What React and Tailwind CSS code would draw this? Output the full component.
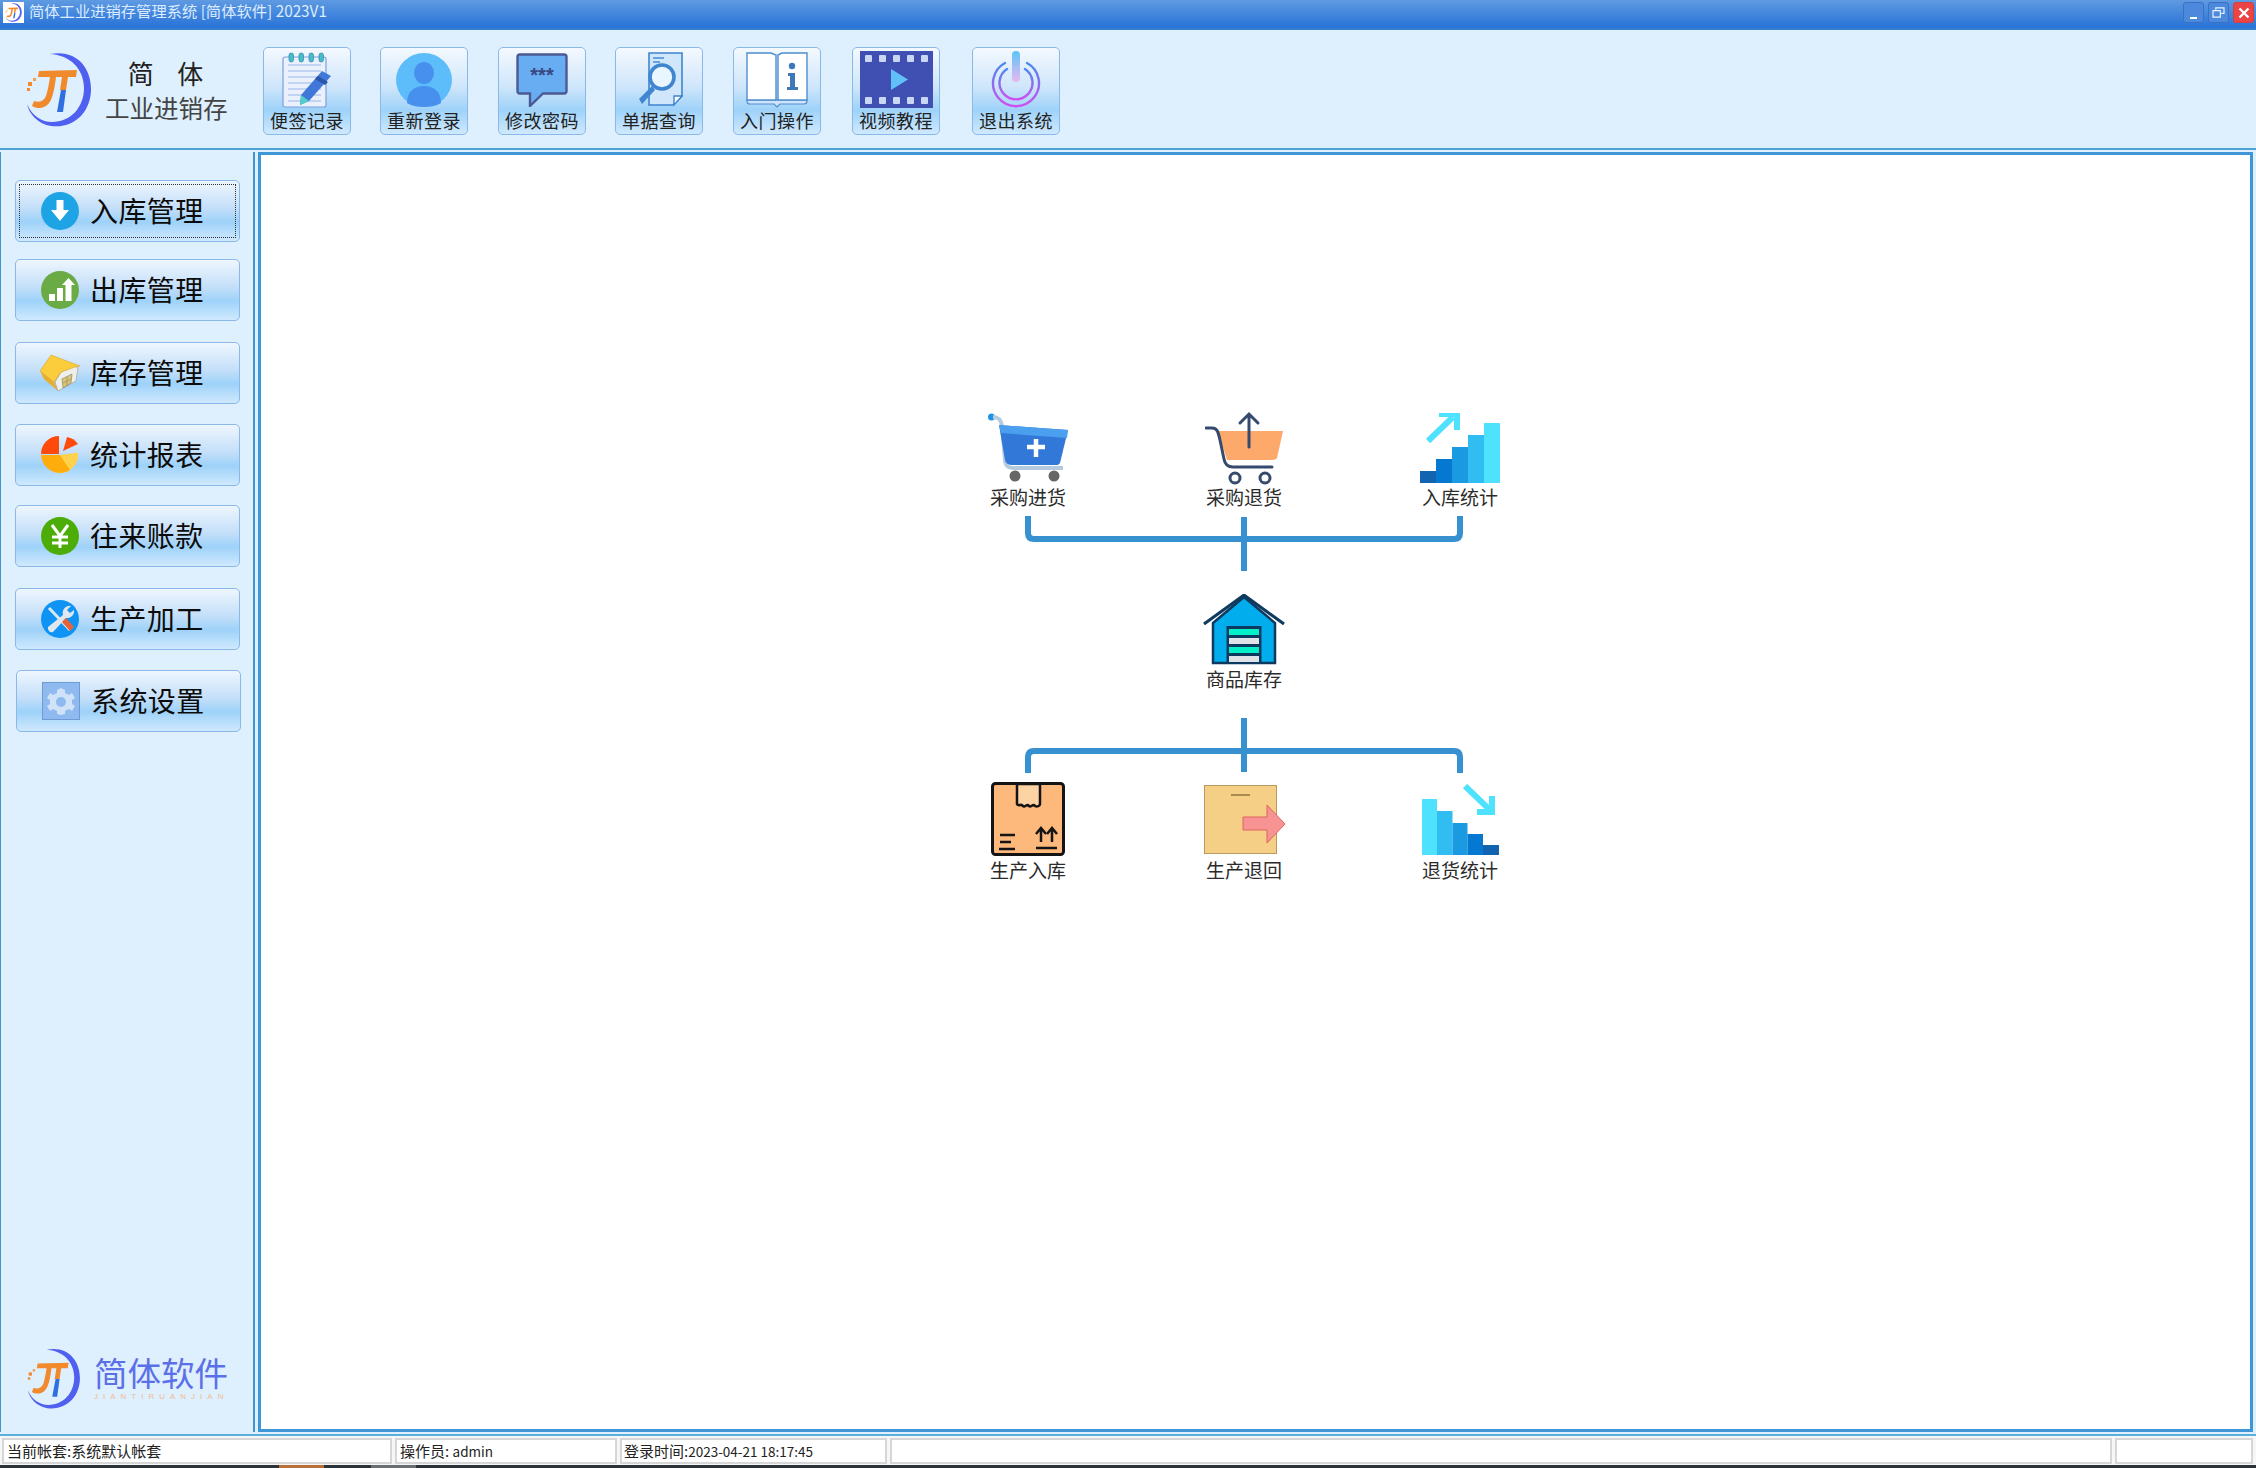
import React from "react";

const F = "font-['Noto_Sans_CJK_SC','Liberation_Sans',sans-serif]";

function Logo({ className }) {
  return (
    <svg viewBox="0 0 65 75" className={className}>
      <path d="M24 2C50-3 65 15 65 37C65 60 48 77 25 74C12 72 3 62 1 52C6 64 16 70 26 70C45 70 58 55 58 36C58 17 44 3 24 2Z" fill="#4f5ff0" />
      <path d="M13 19L51 18L50 25L42 25L40 38L34 38L36 25L30 25C28 40 26 52 18 55C14 57 9 56 6 54L8 49C13 51 18 49 20 44C22 38 23 31 24 25L12 25Z" fill="#f08a2c" />
      <path d="M35 38L40 38L37 60L31 60Z" fill="#2f6fe0" />
      <rect x="2" y="30" width="4" height="4" fill="#f08a2c" />
      <rect x="7" y="26" width="3" height="3" fill="#f5a050" />
      <rect x="1" y="36" width="3" height="3" fill="#f08a2c" />
    </svg>
  );
}

function NoteIcon() {
  return (
    <svg viewBox="0 0 51 56" className="w-[51px] h-[56px]">
      <rect x="1" y="5" width="43" height="50" rx="2" fill="#eaf1fd" stroke="#7d9fe0" strokeWidth="1.2" />
      {[13, 19, 25, 31, 37, 43, 49].map((y) => (
        <line key={y} x1="6" x2="39" y1={y} y2={y} stroke="#b4c8ef" strokeWidth="1.6" />
      ))}
      {[7, 17, 27, 37].map((x) => (
        <rect key={x} x={x} y="1" width="4.5" height="9" rx="2.2" fill="#43bfc6" stroke="#3b7fb4" strokeWidth="0.7" />
      ))}
      <path d="M40 19L49 24L27 49L18 53L19 43Z" fill="#3f78d8" />
      <path d="M19 43L27 49L18 53Z" fill="#50d0c8" />
      <path d="M36 24L46 30L43 33L33 27Z" fill="#2b55a8" />
    </svg>
  );
}
function AvatarIcon() {
  return (
    <svg viewBox="0 0 56 54" className="w-[56px] h-[54px]">
      <ellipse cx="28" cy="27" rx="28" ry="27" fill="#5cbdfa" />
      <ellipse cx="28" cy="20" rx="10" ry="11" fill="#4790ee" />
      <path d="M11 50C11 38 19 33 28 33C37 33 45 38 45 50C40 53 34 54 28 54C22 54 16 53 11 50Z" fill="#4790ee" />
    </svg>
  );
}
function ChatIcon() {
  return (
    <svg viewBox="0 0 52 54" className="w-[52px] h-[54px]">
      <path d="M4 1.5H48Q50.500 1.500 50.500 4V38Q50.500 40.500 48 40.500H27L14 53V40.500H4Q1.500 40.500 1.500 38V4Q1.500 1.500 4 1.500Z" fill="#68acf2" stroke="#4c5a94" strokeWidth="2.4" />
      <text x="26" y="29" textAnchor="middle" fontSize="20" fontWeight="700" fill="#38477e" fontFamily="Liberation Sans">***</text>
    </svg>
  );
}
function DocSearchIcon() {
  return (
    <svg viewBox="0 0 48 56" className="w-[48px] h-[56px]">
      <path d="M14 1H47V44L38 53H14Z" fill="#cfe6fb" stroke="#3f85d0" strokeWidth="1.6" />
      <path d="M47 44H39V53Z" fill="#fff" stroke="#3f85d0" strokeWidth="1.4" />
      <line x1="18" y1="6" x2="29" y2="6" stroke="#3f85d0" strokeWidth="1.4" />
      <line x1="18" y1="10" x2="25" y2="10" stroke="#3f85d0" strokeWidth="1.4" />
      <circle cx="27" cy="25" r="12" fill="#e9f6ff" stroke="#3f85d0" strokeWidth="3.6" />
      <path d="M17 34L4 47L7 52L20 38Z" fill="#3f85d0" />
    </svg>
  );
}
function BookIcon() {
  return (
    <svg viewBox="0 0 62 56" className="w-[62px] h-[56px]">
      <path d="M1 49V48H61V49Q61 52 58 52H34L31 55L28 52H4Q1 52 1 49Z" fill="#cfe4fa" stroke="#4f8fd0" strokeWidth="1.2" />
      <path d="M1 1H25L30 3V48H1Z" fill="#fff" stroke="#4f8fd0" strokeWidth="1.4" />
      <path d="M61 1H36L32 3V48H61Z" fill="#fff" stroke="#4f8fd0" strokeWidth="1.4" />
      <circle cx="46" cy="14" r="3.200" fill="#3f78b8" />
      <path d="M42 21H49V35H52V38H41V35H44V24H42Z" fill="#3f78b8" />
    </svg>
  );
}
function FilmIcon() {
  return (
    <svg viewBox="0 0 73 57" className="w-[73px] h-[57px]">
      <rect width="73" height="57" fill="#3f4fb2" />
      {[5, 19, 33, 47, 61].map((x) => (
        <g key={x}>
          <rect x={x} y="4" width="7" height="7" rx="1" fill="#c9d6f4" />
          <rect x={x} y="46" width="7" height="7" rx="1" fill="#c9d6f4" />
        </g>
      ))}
      <path d="M31 18L48 28.500L31 39Z" fill="#62c0f8" />
    </svg>
  );
}
function PowerIcon() {
  return (
    <svg viewBox="0 0 50 58" className="w-[50px] h-[58px]">
      <defs>
        <linearGradient id="pw" x1="0" y1="0" x2="0" y2="1">
          <stop offset="0" stopColor="#4a8af0" />
          <stop offset="1" stopColor="#d04ff0" />
        </linearGradient>
        <linearGradient id="pb" x1="0" y1="0" x2="0" y2="1">
          <stop offset="0" stopColor="#5cc4f8" />
          <stop offset="1" stopColor="#e8b8f0" />
        </linearGradient>
      </defs>
      <path d="M14 12A23 23 0 1 0 36 12" fill="none" stroke="url(#pw)" strokeWidth="2.400" strokeLinecap="round" />
      <path d="M16 18A16.500 16.500 0 1 0 34 18" fill="none" stroke="url(#pw)" strokeWidth="2.400" strokeLinecap="round" />
      <rect x="21" y="0" width="8" height="31" rx="4" fill="url(#pb)" />
    </svg>
  );
}

const tools = [
  ["便签记录", NoteIcon, "ml-[263px]"],
  ["重新登录", AvatarIcon, "ml-[29px]"],
  ["修改密码", ChatIcon, "ml-[30px]"],
  ["单据查询", DocSearchIcon, "ml-[29px]"],
  ["入门操作", BookIcon, "ml-[30px]"],
  ["视频教程", FilmIcon, "ml-[31px]"],
  ["退出系统", PowerIcon, "ml-[32px]"],
];

function DownIcon() {
  return (
    <svg viewBox="0 0 38 38" className="w-[38px] h-[38px]">
      <circle cx="19" cy="19" r="19" fill="#1ea3e4" />
      <path d="M15.500 8H22.500V18H28L19 29L10 18H15.500Z" fill="#fff" />
    </svg>
  );
}
function BarsIcon() {
  return (
    <svg viewBox="0 0 38 38" className="w-[38px] h-[38px]">
      <circle cx="19" cy="19" r="19" fill="#6aab46" />
      <rect x="8" y="23" width="6" height="7" fill="#fff" />
      <rect x="16" y="17" width="6" height="13" fill="#fff" />
      <path d="M24.500 30V14H21L27.500 7L34 14H30.500V30Z" fill="#fff" />
    </svg>
  );
}
function HouseIcon() {
  return (
    <svg viewBox="0 0 42 38" className="w-[42px] h-[38px]">
      <path d="M1 17L15 28L19 37L5 25Z" fill="#e8ae2c" />
      <path d="M16 28L22 18L36 12L39 14L37 27L19 37Z" fill="#eeeeea" stroke="#a8a8a0" strokeWidth="0.8" />
      <path d="M12 1L41 12L36 13L22 18L15 28L1 17Z" fill="#fbcd3c" stroke="#d8a428" strokeWidth="0.6" />
      <path d="M23 25L33 20L32 29L24 34Z" fill="#dcc470" stroke="#8a8a70" strokeWidth="0.7" />
      <path d="M24 29L32 25M28 23L28 32" stroke="#8a8a70" strokeWidth="0.6" />
    </svg>
  );
}
function PieIcon() {
  return (
    <svg viewBox="0 0 38 38" className="w-[38px] h-[38px]">
      <path d="M19 19L37 19A18 18 0 0 1 9 34Z" fill="#ffd24e" transform="rotate(-8 19 19)" />
      <path d="M19 19L29 34A19 19 0 0 1 0 19Z" fill="#ffad0c" />
      <path d="M18 18H0A18 18 0 0 1 18 0Z" fill="#ff4a0c" />
      <path d="M22 15L26 1A17 17 0 0 1 37 8Z" fill="#ff4a0c" />
    </svg>
  );
}
function YenIcon() {
  return (
    <svg viewBox="0 0 38 38" className="w-[38px] h-[38px]">
      <circle cx="19" cy="19" r="19" fill="#4cac08" />
      <path d="M11 8L19 19L27 8M11 20H27M11 26H27M19 19V31" fill="none" stroke="#fff" strokeWidth="3" />
    </svg>
  );
}
function ToolsIcon() {
  return (
    <svg viewBox="0 0 38 38" className="w-[38px] h-[38px]">
      <circle cx="19" cy="19" r="19" fill="#0f93f4" />
      <path d="M8 8L29 30" stroke="#dbe9f2" strokeWidth="3" />
      <path d="M30 6A7 7 0 0 0 22 15L7 27A4 4 0 0 0 12 32L25 18A7 7 0 0 0 33 10L29 13L26 10Z" fill="#dfe8ee" />
      <path d="M21 22L25 18L33 27L29 31Z" fill="#e8623a" />
    </svg>
  );
}
function GearIcon() {
  return (
    <svg viewBox="0 0 38 38" className="w-[38px] h-[38px]">
      <rect x="0.500" y="0.500" width="37" height="37" fill="#8fbaf0" stroke="#6f9ad6" />
      <path d="M19 6L23 8V11L27 13L30 11L33 16L30 18V22L33 24L30 29L27 27L23 29V32L19 33L15 32V29L11 27L8 29L5 24L8 22V18L5 16L8 11L11 13L15 11V8Z" fill="#cfe2f8" />
      <circle cx="19" cy="20" r="5" fill="#8fbaf0" />
    </svg>
  );
}

const navs = [
  ["入库管理", DownIcon, "mt-[28px]", "ml-[14px]", true],
  ["出库管理", BarsIcon, "mt-[17px]", "ml-[14px]", false],
  ["库存管理", HouseIcon, "mt-[21px]", "ml-[14px]", false],
  ["统计报表", PieIcon, "mt-[20px]", "ml-[14px]", false],
  ["往来账款", YenIcon, "mt-[19px]", "ml-[14px]", false],
  ["生产加工", ToolsIcon, "mt-[21px]", "ml-[14px]", false],
  ["系统设置", GearIcon, "mt-[20px]", "ml-[15px]", false],
];

function CartPlus() {
  return (
    <svg viewBox="0 0 80 70" className="w-[80px] h-[70px]">
      <circle cx="3.500" cy="4" r="3.500" fill="#1f94e4" />
      <path d="M5 4C11 4 13 7 14 13L17 46C17 53 20 55 26 55H75" fill="none" stroke="#b4cade" strokeWidth="4" />
      <path d="M11 12L80 17L72 50Q71 52 69 52H24Q18 52 17 47Z" fill="#3278d8" />
      <path d="M11 12L80 17L79 25L13 20Z" fill="#4aa0ee" />
      <path d="M39 34H57M48 26V44" stroke="#fff" strokeWidth="4.500" />
      <circle cx="27" cy="63" r="5.500" fill="#666" />
      <circle cx="66" cy="63" r="5.500" fill="#666" />
    </svg>
  );
}
function CartUp() {
  return (
    <svg viewBox="0 0 78 74" className="w-[78px] h-[74px]">
      <path d="M13 20H78L72 47Q71 49 65 49H22Z" fill="#fda96c" />
      <path d="M1 17H7C12 17 13 20 15 29L19 48C20 54 23 56 28 56H67" fill="none" stroke="#344a6e" strokeWidth="3" strokeLinecap="round" />
      <path d="M44 36V4M35 12L44 3L53 12" fill="none" stroke="#344a6e" strokeWidth="3" strokeLinecap="round" />
      <circle cx="30" cy="67" r="5" fill="none" stroke="#344a6e" strokeWidth="3" />
      <circle cx="60" cy="67" r="5" fill="none" stroke="#344a6e" strokeWidth="3" />
    </svg>
  );
}
function ChartUp() {
  return (
    <svg viewBox="0 0 80 70" className="w-[80px] h-[70px]">
      <rect x="0" y="58" width="16" height="12" fill="#1364b0" />
      <rect x="16" y="46" width="16" height="24" fill="#0578d2" />
      <rect x="32" y="34" width="16" height="36" fill="#1a9ae0" />
      <rect x="48" y="22" width="16" height="48" fill="#32bdf2" />
      <rect x="64" y="10" width="16" height="60" fill="#4fe2ff" />
      <path d="M8 28L33 4M19 1H37V17" fill="none" stroke="#4fe2ff" strokeWidth="6" />
    </svg>
  );
}
function Warehouse() {
  return (
    <svg viewBox="0 0 82 71" className="w-[82px] h-[71px]">
      <path d="M10 29L41 3L72 29V69H10Z" fill="#02aded" stroke="#0f3a60" strokeWidth="2.500" />
      <path d="M1 30L41 1L81 30" fill="none" stroke="#0f3a60" strokeWidth="3" />
      <rect x="23.500" y="32" width="35" height="37" fill="#0f3a60" />
      <rect x="26" y="35" width="30" height="6" fill="#04f0c8" />
      <rect x="26" y="44" width="30" height="6" fill="#dfe3e8" />
      <rect x="26" y="53" width="30" height="6" fill="#04f0c8" />
      <rect x="26" y="62" width="30" height="6" fill="#dfe3e8" />
    </svg>
  );
}
function BoxIcon() {
  return (
    <svg viewBox="0 0 74 74" className="w-[74px] h-[74px]">
      <rect x="1.500" y="1.500" width="71" height="71" rx="3" fill="#fdb87c" stroke="#141414" strokeWidth="3" />
      <path d="M26 2V22C28 25 30 21 32 24C34 26 36 21 38 24C40 26 42 21 44 24C46 25 49 24 49 22V2Z" fill="#fdd3a4" stroke="#141414" strokeWidth="2.500" />
      <path d="M9 53H24M9 60H20M8 67H24M45 66H66" stroke="#141414" strokeWidth="2.500" />
      <path d="M50 60V47M45 52L50 46L55 52M61 60V47M56 52L61 46L66 52" fill="none" stroke="#141414" strokeWidth="2.500" />
    </svg>
  );
}
function BoxOut() {
  return (
    <svg viewBox="0 0 81 69" className="w-[81px] h-[69px]">
      <rect x="0.500" y="0.500" width="72" height="68" fill="#f5cf85" stroke="#b89a60" />
      <line x1="27" y1="10" x2="46" y2="10" stroke="#a88a50" strokeWidth="2" />
      <path d="M39 32H63V20L81 39L63 58V45H39Z" fill="#f79392" stroke="#dc6462" />
    </svg>
  );
}
function ChartDown() {
  return (
    <svg viewBox="0 0 77 71" className="w-[77px] h-[71px]">
      <rect x="0" y="15" width="15" height="56" fill="#4fe2ff" />
      <rect x="15" y="27" width="15.500" height="44" fill="#32bdf2" />
      <rect x="30.500" y="39" width="15" height="32" fill="#1a9ae0" />
      <rect x="45.500" y="50" width="15.500" height="21" fill="#0578d2" />
      <rect x="61" y="61" width="16" height="10" fill="#1364b0" />
      <path d="M43 2L69 27M55 28H70V12" fill="none" stroke="#4fe2ff" strokeWidth="6" />
    </svg>
  );
}

function Node({ Icon, label, h, lift }) {
  return (
    <div className="flex flex-col items-center">
      <div className={`flex items-center justify-center ${h}`}>
        <Icon />
      </div>
      <div className={`${lift} text-[19px] leading-[22px] text-[#2b2b2b]`}>{label}</div>
    </div>
  );
}

function Connector({ down }) {
  const d = down
    ? "M108 55V39Q108 33 114 33H534Q540 33 540 39V55"
    : "M108 0V17Q108 23 114 23H534Q540 23 540 17V0";
  return (
    <svg viewBox="0 0 648 60" className="w-[648px] h-[60px]">
      <path d={d} fill="none" stroke="#3790cf" strokeWidth="6" />
      <path d="M324 0V54" stroke="#3790cf" strokeWidth="6" transform={down ? "translate(0 0)" : "translate(0 1)"} />
    </svg>
  );
}

export default function App() {
  return (
    <div className={`${F} w-[2256px] h-[1468px] flex flex-col overflow-hidden bg-[#deeffe]`}>
      {/* Title bar */}
      <div className="h-[30px] shrink-0 flex items-start bg-[linear-gradient(#5f9ae2,#2a74d8_90%,#3a86cc)]">
        <div className="ml-[3px] mt-[2px] w-[21px] h-[21px] bg-white flex items-center justify-center">
          <Logo className="w-[17px] h-[19px]" />
        </div>
        <span className="ml-[5px] text-[15.300px] leading-[20px] text-[#dcecff]">简体工业进销存管理系统 [简体软件] 2023V1</span>
        <div className="ml-auto mr-[2px] mt-[2px] flex gap-[4px]">
          <div className="w-[21px] h-[21px] rounded-[3px] bg-[#4c88dc] border border-[#3a70c0] flex items-end justify-center pb-[3px]">
            <div className="w-[7px] h-[2px] bg-white" />
          </div>
          <div className="w-[21px] h-[21px] rounded-[3px] bg-[#4c88dc] border border-[#3a70c0] flex items-center justify-center">
            <svg viewBox="0 0 14 12" className="w-[13px] h-[11px]">
              <path d="M4 3V1H13V7H10M1 4H9V11H1Z" fill="none" stroke="#e8f2ff" strokeWidth="1.300" />
            </svg>
          </div>
          <div className="w-[21px] h-[21px] rounded-[3px] bg-[#ec4444] border border-[#d04040] flex items-center justify-center">
            <svg viewBox="0 0 12 12" className="w-[12px] h-[12px]">
              <path d="M1.500 1.500L10.500 10.500M10.500 1.500L1.500 10.500" stroke="#fff" strokeWidth="2.400" />
            </svg>
          </div>
        </div>
      </div>

      {/* Toolbar */}
      <div className="relative h-[120px] shrink-0 flex items-start pt-[17px] border-b-[2px] border-[#4ea2d4]">
        <div className="absolute left-[26px] top-[22px] flex items-center">
          <Logo className="w-[65px] h-[75px]" />
          <div className="ml-[14px] flex flex-col items-center text-[#333]">
            <span className="text-[26px] leading-[34px] mt-[1px] whitespace-pre text-[#222] tracking-[1.5px]">简   体</span>
            <span className="text-[24.500px] leading-[34px] mt-[1px] text-[#444]">工业进销存</span>
          </div>
        </div>
        {tools.map(([label, Icon, ml]) => (
          <div
            key={label}
            className={`${ml} w-[88px] h-[88px] shrink-0 flex flex-col items-center rounded-[5px] border border-[#8ab8e8] bg-[linear-gradient(#f4f9fe,#cfe6fb_45%,#9ed2f9_72%,#cfe9fe_100%)]`}
          >
            <div className="h-[61px] flex items-center justify-center pt-[2px]">
              <Icon />
            </div>
            <span className="text-[18px] leading-[22px] text-[#222] tracking-[0.5px] whitespace-nowrap">{label}</span>
          </div>
        ))}
      </div>

      {/* Body */}
      <div className="flex-1 flex min-h-0 pt-[2px]">
        <aside className="w-[255px] shrink-0 relative flex flex-col border-l border-r-[2px] border-[#3f96cf]">
          {navs.map(([label, Icon, mt, ml, active]) => (
            <div
              key={label}
              className={`${mt} ${ml} w-[225px] h-[62px] flex items-center pl-[23px] rounded-[5px] border border-[#8ab8e8] bg-[linear-gradient(#eef6fe,#c4dff9_45%,#9ed2f9_68%,#cfe9fe_100%)]`}
            >
              {active ? <div className="absolute ml-[-20px] w-[217px] h-[54px] border border-dotted border-[#333]" /> : null}
              <div className="w-[42px] flex justify-center shrink-0">
                <Icon />
              </div>
              <span className="ml-[9px] -mt-[2px] text-[28px] leading-[36px] tracking-[0.4px] text-[#0c0c0c] whitespace-nowrap">{label}</span>
            </div>
          ))}
          <div className="mt-auto mb-[23px] ml-[26px] flex items-center">
            <Logo className="w-[53px] h-[61px]" />
            <div className="ml-[14px] flex flex-col">
              <span className="text-[33.500px] leading-[34px] text-[#5b70e8] whitespace-nowrap">简体软件</span>
              <span className="mt-[3px] text-[8px] leading-[10px] tracking-[5px] text-[#f0bc90] font-['Liberation_Sans',sans-serif] whitespace-nowrap">JIANTIRUANJIAN</span>
            </div>
          </div>
        </aside>

        <main className="flex-1 ml-[3px] mr-[3px] border-[3px] border-[#3f96d6] bg-white pl-[659px] pt-[256px] min-w-0">
          <div className="w-[648px]">
            <div className="grid grid-cols-3 h-[105px]">
              <Node Icon={CartPlus} label="采购进货" h="h-[74px]" lift="mt-[1px]" />
              <Node Icon={CartUp} label="采购退货" h="h-[74px]" lift="mt-[1px]" />
              <Node Icon={ChartUp} label="入库统计" h="h-[74px]" lift="mt-[1px]" />
            </div>
            <Connector />
            <div className="flex justify-center mt-[17px] h-[125px]">
              <Node Icon={Warehouse} label="商品库存" h="h-[73px]" lift="mt-[2px]" />
            </div>
            <Connector down />
            <div className="grid grid-cols-3 mt-[4px]">
              <Node Icon={BoxIcon} label="生产入库" h="h-[74px]" lift="mt-[3px]" />
              <Node Icon={BoxOut} label="生产退回" h="h-[74px]" lift="mt-[3px]" />
              <Node Icon={ChartDown} label="退货统计" h="h-[74px]" lift="mt-[3px]" />
            </div>
          </div>
        </main>
      </div>

      {/* Status bar */}
      <div className="h-[34px] shrink-0 mt-[2px] flex flex-col bg-[#f6f6f6] border-t-[2px] border-[#5aaede]">
        <div className="flex gap-[3px] pl-[2px] pr-[3px] pt-[2px] h-[29px] text-[15px] leading-[22px] text-[#222]">
          <div className="w-[390px] h-[26px] border-2 border-[#d6d6d6] bg-white pl-[3px] whitespace-nowrap">当前帐套:系统默认帐套</div>
          <div className="w-[222px] h-[26px] border-2 border-[#d6d6d6] bg-white pl-[3px] whitespace-nowrap">操作员: <span className="text-[13.500px]">admin</span></div>
          <div className="w-[267px] h-[26px] border-2 border-[#d6d6d6] bg-white pl-[2px] whitespace-nowrap">登录时间:<span className="text-[13.500px]">2023-04-21 18:17:45</span></div>
          <div className="flex-1 h-[26px] border-2 border-[#d6d6d6] bg-white" />
          <div className="w-[138px] h-[26px] border-2 border-[#d6d6d6] bg-white" />
        </div>
        <div className="flex-1 flex bg-[#2b3338]">
          <div className="ml-[279px] w-[45px] bg-[#b87038]" />
          <div className="ml-[47px] w-[45px] bg-[#6b6f72]" />
        </div>
      </div>
    </div>
  );
}
